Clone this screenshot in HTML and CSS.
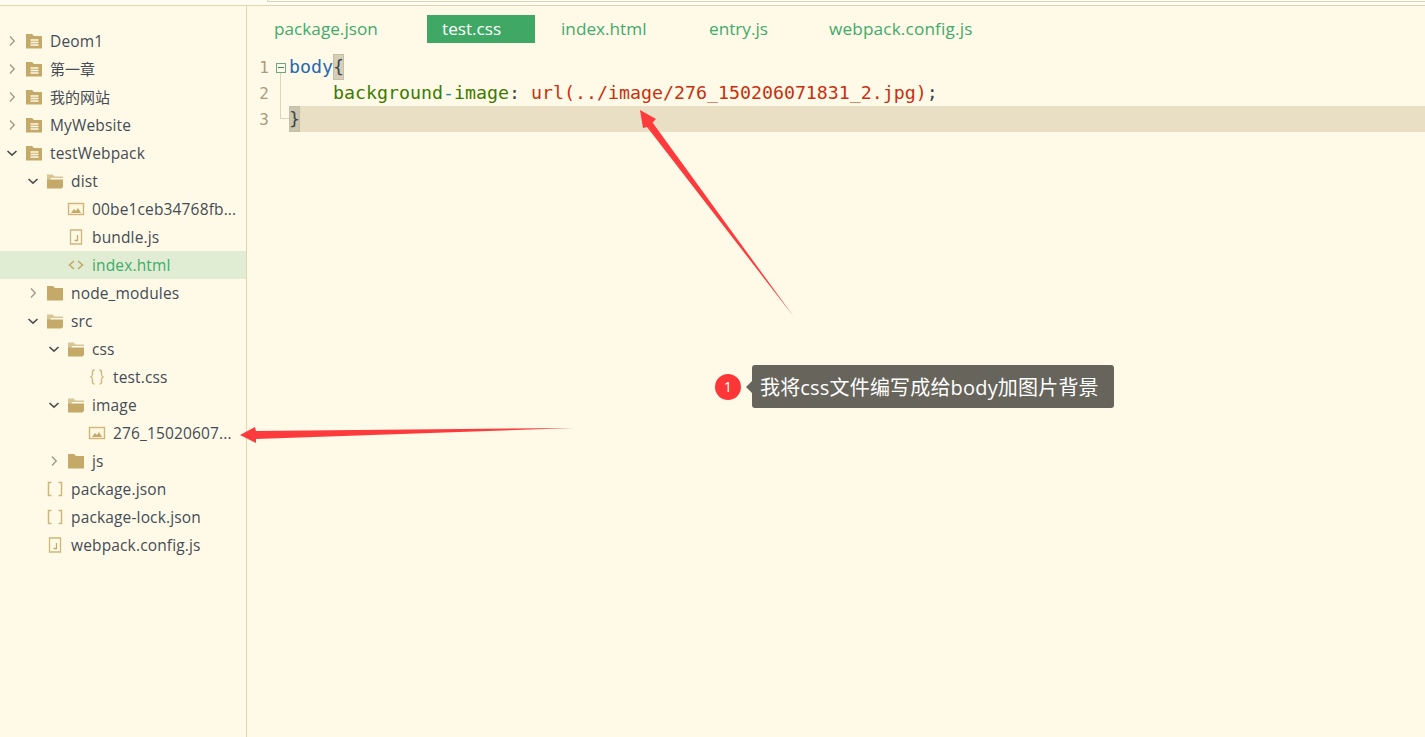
FILE: index.html
```html
<!DOCTYPE html>
<html lang="zh">
<head>
<meta charset="utf-8">
<title>testWebpack</title>
<link rel="stylesheet" href="styles.css">
</head>
<body>
<svg class="defs" width="0" height="0" aria-hidden="true">
  <symbol id="i-right" viewBox="0 0 12 12"><path d="M4 1.500l4.200 4.500L4 10.500" fill="none" stroke="currentColor" stroke-width="1.400"/></symbol>
  <symbol id="i-down" viewBox="0 0 12 12"><path d="M1.500 4L6 8.200 10.500 4" fill="none" stroke="currentColor" stroke-width="1.600"/></symbol>
  <symbol id="i-project" viewBox="0 0 18 16"><path d="M1 1h6l2 2h8v12.500H1z" fill="#c4a968"/><path d="M5.500 7h8M5.500 9.500h8M5.500 12h8" stroke="#fff9e8" stroke-width="1.300"/></symbol>
  <symbol id="i-closed" viewBox="0 0 18 16"><path d="M1 1h6l2 2h8v12.500H1z" fill="#c4a968"/></symbol>
  <symbol id="i-open" viewBox="0 0 18 16"><path d="M1 15V1.500h5.500l2 2H17v1.500H5z" fill="#d6c596"/><path d="M1 15.500V6.500h16V13c0 1.500-1 2.500-2 2.500z" fill="#c4a968"/></symbol>
  <symbol id="i-image" viewBox="0 0 18 16"><rect x="1.500" y="2.500" width="15" height="11" fill="#fff8e0" stroke="#cdb67c" stroke-width="1.400"/><path d="M4 12l3-4 2 2 2-3 3 5z" fill="#c4a968"/></symbol>
  <symbol id="i-js" viewBox="0 0 18 16"><path d="M3.500 1h11v14h-11z" fill="none" stroke="#cdb67c" stroke-width="1.300"/><path d="M10.500 6v5.500H7.500" fill="none" stroke="#c4a968" stroke-width="1.300"/></symbol>
  <symbol id="i-html" viewBox="0 0 18 16"><path d="M7 4L2.500 8 7 12M11 4l4.500 4L11 12" fill="none" stroke="#c4a968" stroke-width="1.600"/></symbol>
  <symbol id="i-css" viewBox="0 0 18 16"><path d="M6.500 1C4 1 4.500 3 4.500 5S4.500 7.500 2.500 8c2 .5 2 1 2 3S4 15 6.500 15M11.500 1C14 1 13.500 3 13.500 5s0 2.500 2 3c-2 .5-2 1-2 3s.5 4-2 4" fill="none" stroke="#cdb67c" stroke-width="1.400"/></symbol>
  <symbol id="i-json" viewBox="0 0 18 16"><path d="M5.500 1.500h-3v13h3M12.500 1.500h3v13h-3" fill="none" stroke="#cdb67c" stroke-width="1.500"/></symbol>
</svg>

<header class="topbar"><div class="address"></div></header>

<main class="workbench">
  <nav class="tree">
    <div class="row d0"><svg class="chev"><use href="#i-right"/></svg><svg class="ico"><use href="#i-project"/></svg><span class="name">Deom1</span></div>
    <div class="row d0"><svg class="chev"><use href="#i-right"/></svg><svg class="ico"><use href="#i-project"/></svg><span class="name cjk">第一章</span></div>
    <div class="row d0"><svg class="chev"><use href="#i-right"/></svg><svg class="ico"><use href="#i-project"/></svg><span class="name cjk">我的网站</span></div>
    <div class="row d0"><svg class="chev"><use href="#i-right"/></svg><svg class="ico"><use href="#i-project"/></svg><span class="name">MyWebsite</span></div>
    <div class="row d0"><svg class="chev open"><use href="#i-down"/></svg><svg class="ico"><use href="#i-project"/></svg><span class="name">testWebpack</span></div>
    <div class="row d1"><svg class="chev open"><use href="#i-down"/></svg><svg class="ico"><use href="#i-open"/></svg><span class="name">dist</span></div>
    <div class="row d2"><span class="chev"></span><svg class="ico"><use href="#i-image"/></svg><span class="name">00be1ceb34768fb...</span></div>
    <div class="row d2"><span class="chev"></span><svg class="ico"><use href="#i-js"/></svg><span class="name">bundle.js</span></div>
    <div class="row d2 selected"><span class="chev"></span><svg class="ico"><use href="#i-html"/></svg><span class="name">index.html</span></div>
    <div class="row d1"><svg class="chev"><use href="#i-right"/></svg><svg class="ico"><use href="#i-closed"/></svg><span class="name">node_modules</span></div>
    <div class="row d1"><svg class="chev open"><use href="#i-down"/></svg><svg class="ico"><use href="#i-open"/></svg><span class="name">src</span></div>
    <div class="row d2"><svg class="chev open"><use href="#i-down"/></svg><svg class="ico"><use href="#i-open"/></svg><span class="name">css</span></div>
    <div class="row d3"><span class="chev"></span><svg class="ico"><use href="#i-css"/></svg><span class="name">test.css</span></div>
    <div class="row d2"><svg class="chev open"><use href="#i-down"/></svg><svg class="ico"><use href="#i-open"/></svg><span class="name">image</span></div>
    <div class="row d3"><span class="chev"></span><svg class="ico"><use href="#i-image"/></svg><span class="name">276_15020607...</span></div>
    <div class="row d2"><svg class="chev"><use href="#i-right"/></svg><svg class="ico"><use href="#i-closed"/></svg><span class="name">js</span></div>
    <div class="row d1"><span class="chev"></span><svg class="ico"><use href="#i-json"/></svg><span class="name">package.json</span></div>
    <div class="row d1"><span class="chev"></span><svg class="ico"><use href="#i-json"/></svg><span class="name">package-lock.json</span></div>
    <div class="row d1"><span class="chev"></span><svg class="ico"><use href="#i-js"/></svg><span class="name">webpack.config.js</span></div>
  </nav>

  <section class="editor">
    <div class="tabs">
      <div class="tab">package.json</div>
      <div class="tab active">test.css</div>
      <div class="tab">index.html</div>
      <div class="tab">entry.js</div>
      <div class="tab wide">webpack.config.js</div>
    </div>
    <div class="code">
      <div class="line">
        <span class="ln">1</span>
        <span class="gutter"><span class="fold"></span></span>
        <span class="src"><span class="sel">body</span><span class="bracket">{</span></span>
      </div>
      <div class="line">
        <span class="ln">2</span>
        <span class="gutter"><span class="guide"></span></span>
        <span class="src">    <span class="prop">background</span><span class="dash">-</span><span class="prop">image</span><span class="punct">:</span> <span class="val">url(../image/276_150206071831_2.jpg)</span><span class="punct">;</span></span>
      </div>
      <div class="line">
        <span class="ln">3</span>
        <span class="gutter"><span class="guide-end"></span></span>
        <span class="src current"><span class="bracket strong">}</span></span>
      </div>
    </div>
  </section>
</main>

<aside class="note">
  <span class="badge">1</span>
  <span class="bubble">我将css文件编写成给body加图片背景</span>
</aside>

<svg class="arrows" width="1425" height="737" viewBox="0 0 1425 737" aria-hidden="true">
  <polygon points="640,110 656,119 652.500,122.500 794,317 647,127 643,128" fill="#fd3a3c"/>
  <polygon points="240,435 255,427 256,431 573,428 256,439 256,443" fill="#fd3a3c"/>
</svg>
</body>
</html>
```

FILE: styles.css
```css
* { box-sizing: border-box; }
html, body { height: 100%; }
body {
  margin: 0;
  background: #fffae8;
  font-family: "Open Sans", "Noto Sans CJK SC", sans-serif;
  color: #444c56;
  overflow: hidden;
  position: relative;
}
.defs { position: absolute; }

.topbar {
  height: 6px;
  background: #fefcf3;
  border-bottom: 1px solid #e3d5a9;
  padding-left: 267px;
}
.address {
  height: 2px;
  background: #fff;
  border-left: 1px solid #e0d3ac;
  border-bottom: 1px solid #e0d3ac;
}

.workbench {
  display: flex;
  height: 731px;
}

.tree {
  width: 247px;
  flex: none;
  padding-top: 21px;
  border-right: 1px solid #e3d5a9;
  font-size: 15.5px;
}
.row {
  height: 28px;
  display: flex;
  align-items: center;
  white-space: nowrap;
}
.row.d0 { padding-left: 6px; }
.row.d1 { padding-left: 27px; }
.row.d2 { padding-left: 48px; }
.row.d3 { padding-left: 69px; }
.row.selected { background: #e0edd2; }
.row.selected .name { color: #3fab6b; }
.chev {
  width: 12px;
  height: 12px;
  flex: none;
  color: #a39a84;
}
.chev.open { color: #4b4d4e; }
.ico {
  width: 18px;
  height: 16px;
  flex: none;
  margin: 0 7px 0 7px;
}
.name { letter-spacing: 0.15px; }
.name.cjk {
  font-size: 15px;
  letter-spacing: 0;
  padding-bottom: 2px;
}

.editor {
  flex: 1;
  min-width: 0;
}
.tabs {
  display: grid;
  grid-template-columns: 168px 119px 148px 120px auto;
  height: 28px;
  margin: 9px 0 11px 12px;
  font-size: 17.2px;
  color: #3fab6b;
}
.tab {
  padding: 0 15px;
  line-height: 28px;
  white-space: nowrap;
}
.tab.wide { letter-spacing: 0.15px; }
.tab.active {
  width: 108px;
  background: #3fa864;
  color: #fff;
}

.code {
  font-family: "DejaVu Sans Mono", monospace;
  font-size: 18.27px;
}
.line {
  display: flex;
  height: 26px;
  line-height: 26px;
}
.ln {
  width: 22px;
  flex: none;
  text-align: right;
  font-size: 16px;
  line-height: 28px;
  color: #a89c7d;
}
.gutter {
  width: 20px;
  flex: none;
  position: relative;
}
.fold {
  position: absolute;
  left: 7px;
  top: 9px;
  width: 10px;
  height: 10px;
  border: 1px solid #6fa58b;
}
.fold::after {
  content: "";
  position: absolute;
  left: 1px;
  right: 1px;
  top: 3px;
  height: 1px;
  background: #3d8a66;
}
.guide {
  position: absolute;
  left: 11px;
  top: -7px;
  bottom: 0;
  width: 1px;
  background: #ddd5bb;
}
.guide-end {
  position: absolute;
  left: 11px;
  top: 0;
  width: 9px;
  height: 13px;
  border-left: 1px solid #ddd5bb;
  border-bottom: 1px solid #ddd5bb;
}
.src {
  flex: 1;
  white-space: pre;
  color: #3b4650;
}
.src.current { background: #e8dfc4; }
.sel { color: #2568b5; }
.bracket {
  display: inline-block;
  vertical-align: top;
  width: 11px;
  height: 26px;
  background: #d6cfb8;
  box-shadow: inset 0 0 0 1px #c6bfa8;
  color: #3b4650;
}
.bracket.strong { background: #cdc6ae; }
.prop { color: #3d7a00; }
.dash { color: #2b8a9a; }
.punct { color: #3b4650; }
.val { color: #c8300f; }

.note {
  position: absolute;
  left: 715px;
  top: 365px;
  display: flex;
  align-items: center;
  gap: 11px;
}
.badge {
  width: 26px;
  height: 26px;
  border-radius: 50%;
  background: #fe3638;
  color: #fff;
  font-size: 14.5px;
  line-height: 25px;
  text-align: center;
}
.bubble {
  position: relative;
  width: 362px;
  height: 43px;
  padding-left: 8px;
  line-height: 45px;
  background: #67645c;
  border-radius: 3px;
  color: #fff;
  font-size: 20px;
  letter-spacing: 0.18px;
  white-space: nowrap;
}
.bubble::before {
  content: "";
  position: absolute;
  left: -6px;
  top: 16px;
  border: 6px solid transparent;
  border-left: 0;
  border-right-color: #67645c;
}
.arrows {
  position: absolute;
  left: 0;
  top: 0;
  pointer-events: none;
}
```
